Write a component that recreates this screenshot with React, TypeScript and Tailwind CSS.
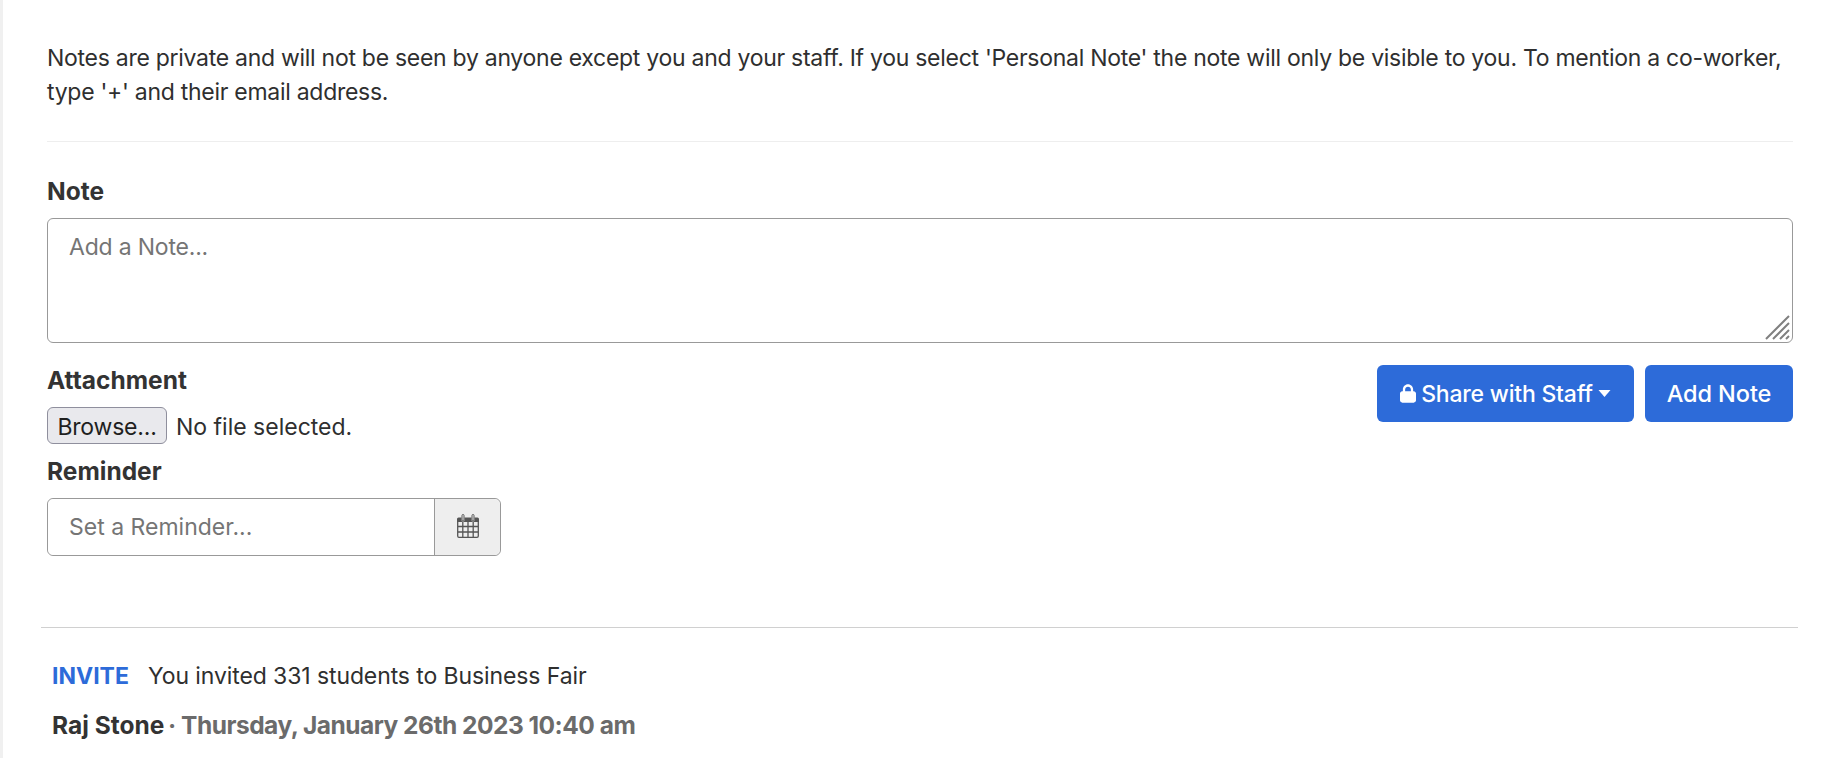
function LockIcon() {
  return (
    <svg viewBox="0 0 448 512" className="h-[19px] w-[16px] fill-white" aria-hidden="true">
      <path d="M144 144v48h160v-48c0-44.2-35.8-80-80-80s-80 35.800-80 80zM80 192v-48C80 64.500 144.500 0 224 0s144 64.500 144 144v48h16c35.300 0 64 28.700 64 64v192c0 35.300-28.700 64-64 64H64c-35.300 0-64-28.700-64-64V256c0-35.300 28.700-64 64-64h16z" />
    </svg>
  );
}

function CalendarIcon() {
  return (
    <svg viewBox="0 0 22 24" className="-mt-[2px] h-[24px] w-[22px] text-[#555555]" aria-hidden="true">
      <path fill="currentColor" d="M1.500 3.500h3v2.500a1.500 1.500 0 0 0 3 0V3.500h7v2.500a1.500 1.500 0 0 0 3 0V3.500h3A1.500 1.500 0 0 1 22 5v3H0V5a1.500 1.500 0 0 1 1.500-1.500z" />
      <rect x="5" y="0.500" width="2" height="6.500" rx="1" fill="none" stroke="currentColor" strokeWidth="1" />
      <rect x="15" y="0.500" width="2" height="6.500" rx="1" fill="none" stroke="currentColor" strokeWidth="1" />
      <path fill="none" stroke="currentColor" strokeWidth="1.300" d="M.7 8v14a1.300 1.300 0 0 0 1.300 1.300h18a1.300 1.300 0 0 0 1.300-1.300V8M.7 12.500h20.600M.7 18h20.600M5.800 8v15M11 8v15M16.200 8v15" />
    </svg>
  );
}

function ResizeGrip() {
  return (
    <svg viewBox="0 0 25 25" className="pointer-events-none absolute bottom-[3px] right-[3px] h-[25px] w-[25px] text-[#808080]" aria-hidden="true">
      <path stroke="currentColor" strokeWidth="2" fill="none" d="M1 24 24 1M8 24 24 8M15 24l9-9M21 24l3-3" />
    </svg>
  );
}

export default function App() {
  return (
    <div className="min-h-[758px] overflow-hidden border-l-[3px] border-[#f0f0f0] bg-white font-['Inter',sans-serif] text-[23px] leading-[34px] tracking-[-0.28px] text-[#2f2f2f]">
      <div className="pl-[44px] pr-[37px] pt-[41px]">
        <p>
          Notes are private and will not be seen by anyone except you and your staff. If you select 'Personal Note' the note will only be visible to you. To mention a co-worker, type '+' and their email address.
        </p>
        <hr className="mt-[32px] border-[#eeeeee]" />

        <label className="mt-[34px] block text-[24.500px] font-bold leading-[30px] tracking-normal text-[#333333]">Note</label>
        <div className="relative mt-[12px]">
          <textarea
            placeholder="Add a Note..."
            className="block h-[125px] w-full resize-none rounded-[6px] border border-[#999999] px-[21px] pb-[10px] pt-[14px] text-[23px] leading-[28px] tracking-[-0.2px] outline-none placeholder:text-[#757575]"
          />
          <ResizeGrip />
        </div>

        <div className="mt-[22px] flex items-start justify-between">
          <div>
            <label className="block text-[24.500px] font-bold leading-[30px] tracking-normal text-[#333333]">Attachment</label>
            <div className="mt-[12px] flex items-center gap-[9px]">
              <button className="flex h-[37px] w-[120px] items-center justify-center rounded-[6px] border border-[#8f8f9d] bg-[#e9e9ed] pt-[2px] text-[23px] tracking-[-0.2px] text-[#1f1f1f]">
                Browse...
              </button>
              <span className="pt-[2px] text-[23px] tracking-normal">No file selected.</span>
            </div>
            <label className="mt-[12px] block text-[24.500px] font-bold leading-[30px] tracking-normal text-[#333333]">Reminder</label>
            <div className="mt-[12px] flex h-[58px] w-[454px] rounded-[6px] border border-[#999999]">
              <input
                placeholder="Set a Reminder..."
                className="min-w-0 flex-1 rounded-l-[6px] bg-white px-[21px] text-[23px] tracking-normal outline-none placeholder:text-[#757575]"
              />
              <span className="flex w-[66px] items-center justify-center rounded-r-[6px] border-l border-[#999999] bg-[#eeeeee]">
                <CalendarIcon />
              </span>
            </div>
          </div>

          <div className="flex gap-[11px]">
            <button className="flex h-[57px] w-[257px] items-center justify-center gap-[5px] rounded-[6px] bg-[#2d6bd9] text-[23px] font-medium tracking-[-0.2px] text-white">
              <LockIcon />
              Share with Staff
              <svg viewBox="0 0 12 7" className="h-[7px] w-[13px] fill-white" aria-hidden="true">
                <path d="M0 0h12L6 7z" />
              </svg>
            </button>
            <button className="h-[57px] w-[148px] rounded-[6px] bg-[#2d6bd9] text-[23.500px] font-medium tracking-[-0.1px] text-white">
              Add Note
            </button>
          </div>
        </div>
      </div>

      <div className="ml-[38px] mr-[32px] mt-[71px] border-t border-[#d0d0d0] pl-[11px] pt-[31px]">
        <div className="flex items-center">
          <span className="w-[96px] text-[23px] font-bold tracking-normal text-[#2d6bd9]">INVITE</span>
          <span className="tracking-[-0.1px]">You invited 331 students to Business Fair</span>
        </div>
        <div className="mt-[15px] text-[24.500px] font-bold tracking-normal text-[#333333]">
          Raj Stone <span className="-ml-[2px] tracking-[-0.5px] text-[#6b6b6b]">· Thursday, January 26th 2023 10:40 am</span>
        </div>
      </div>
    </div>
  );
}
